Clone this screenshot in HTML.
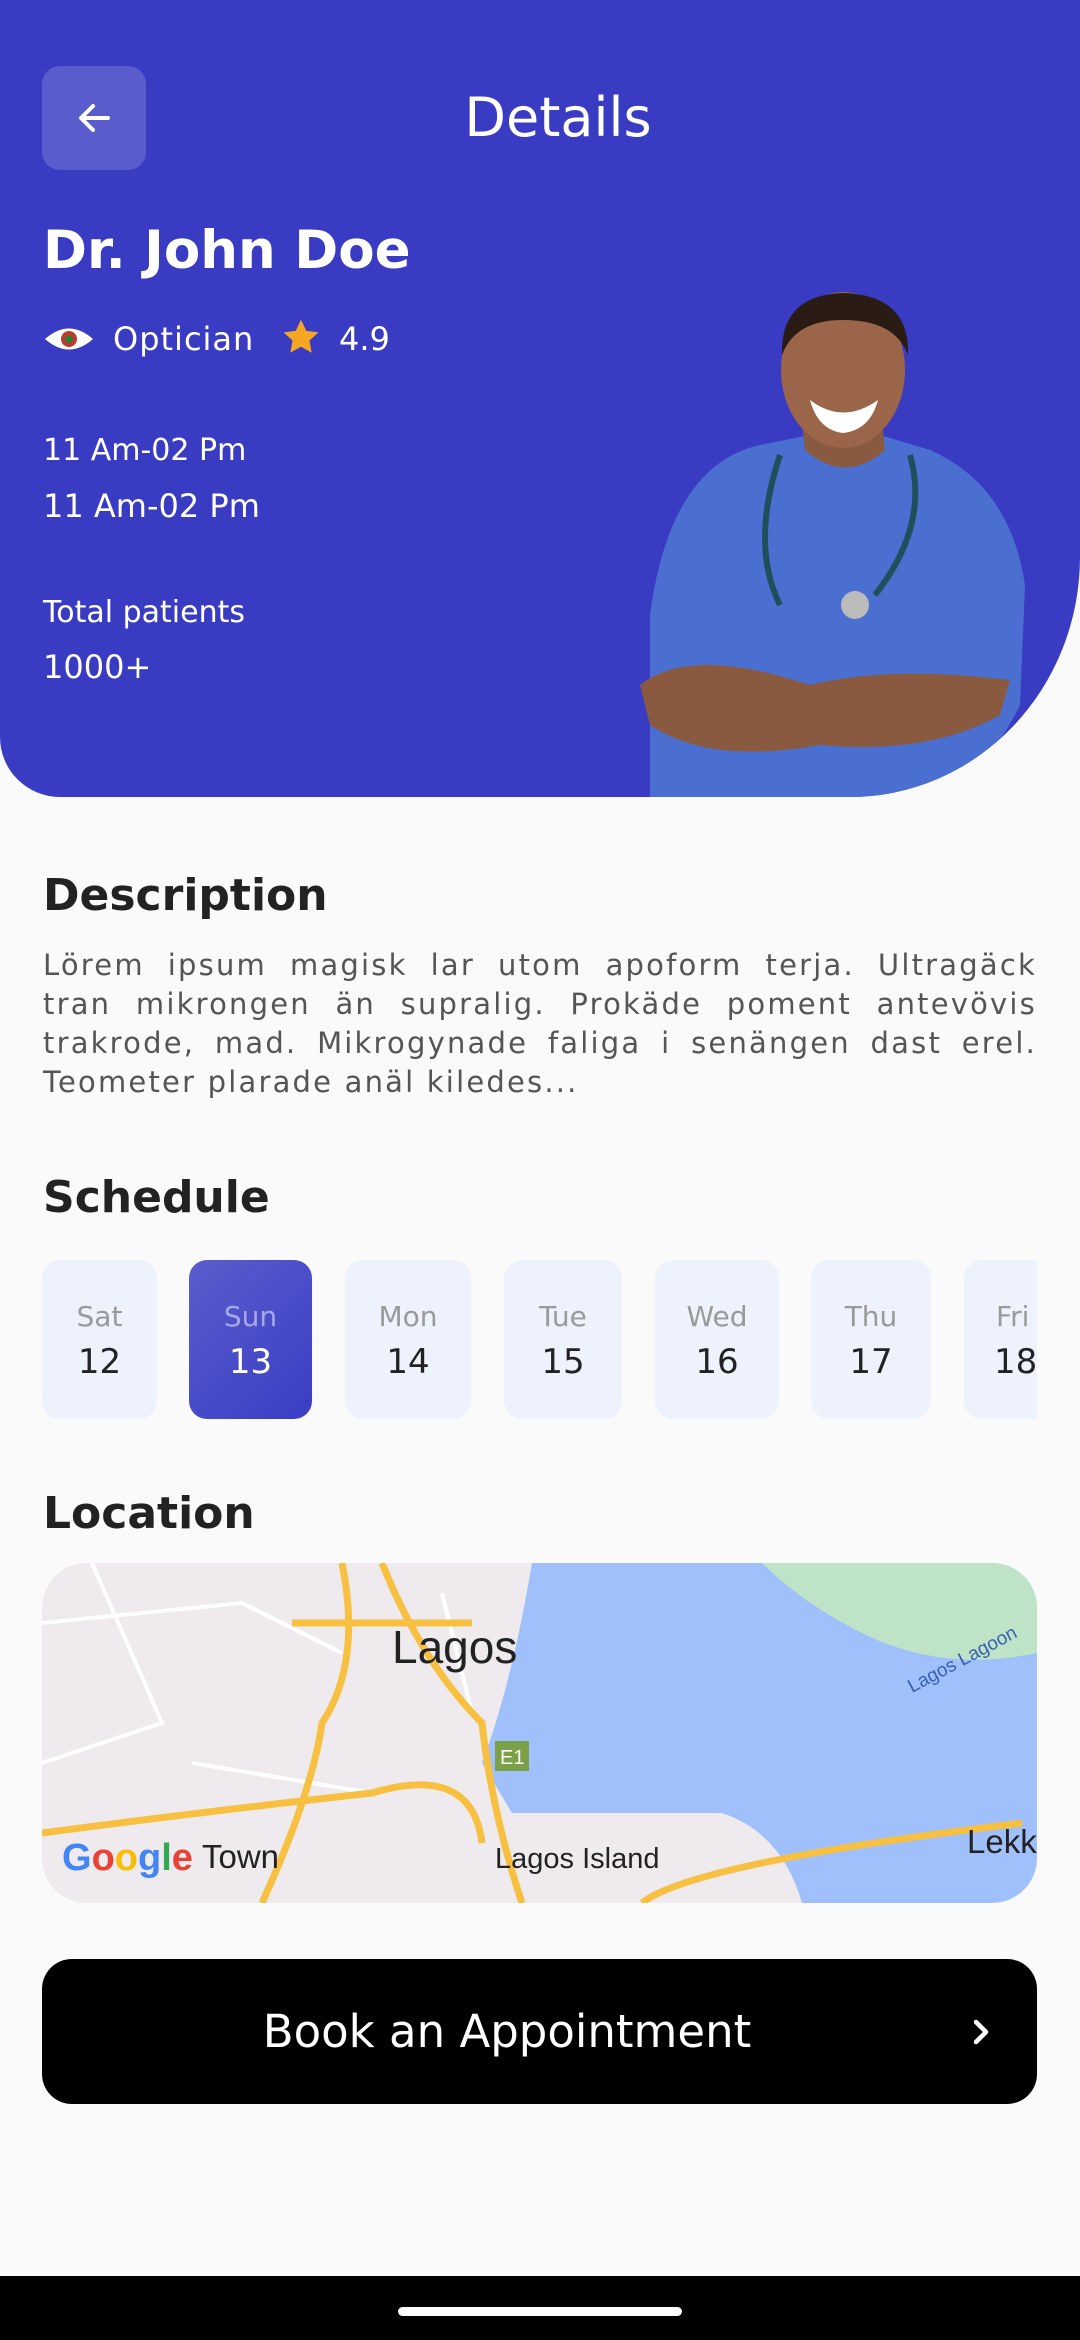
<!DOCTYPE html>
<html><head><meta charset="utf-8"><style>
*{margin:0;padding:0;box-sizing:border-box}
body{width:1080px;height:2340px;background:#fafafa;font-family:"DejaVu Sans","Liberation Sans",sans-serif;position:relative;overflow:hidden;color:#222}
.hdr{position:absolute;left:0;top:0;width:1080px;height:797px;background:#393cc3;border-radius:0 0 230px 60px / 0 0 240px 60px;overflow:hidden}
.abs{position:absolute}
.w{color:#fff}
.card{position:absolute;top:1260px;height:159px;background:#eef2fd;border-radius:18px;text-align:center}
.card .d{position:absolute;top:40px;width:100%;font-size:28px;color:#9a9a9a}
.card .n{position:absolute;top:82px;width:100%;font-size:34px;color:#222}
.desc div{text-align:justify;text-align-last:justify;height:39px;white-space:nowrap}
</style></head><body>
<div class="hdr">
  <div class="abs" style="left:42px;top:66px;width:104px;height:104px;border-radius:18px;background:rgba(255,255,255,0.17)"></div>
  <svg class="abs" style="left:74px;top:98px" width="40" height="40" viewBox="0 0 40 40"><path d="M34 20H8M19 8L7 20l12 12" stroke="#fff" stroke-width="4" fill="none" stroke-linecap="round" stroke-linejoin="round"/></svg>
  <div class="abs w" style="left:0;width:1116px;text-align:center;top:86px;font-size:54px">Details</div>
  <div class="abs w" style="left:43px;top:220px;font-size:53px;font-weight:bold">Dr. John Doe</div>
  <svg class="abs" style="left:43px;top:324px" width="52" height="30" viewBox="0 0 52 30"><path d="M2 15Q26 -6 50 15Q26 36 2 15Z" fill="#fff"/><circle cx="26" cy="15" r="8" fill="#c0392b"/><circle cx="26" cy="15" r="4" fill="#2e7d32"/></svg>
  <div class="abs w" style="left:113px;top:320px;font-size:32px;letter-spacing:1px">Optician</div>
  <svg class="abs" style="left:281px;top:318px" width="40" height="38" viewBox="0 0 24 23"><path d="M12 1l3.2 6.8 7.3.9-5.4 5 1.4 7.3L12 17.4 5.5 21l1.4-7.3-5.4-5 7.3-.9z" fill="#f5a623"/></svg>
  <div class="abs w" style="left:339px;top:320px;font-size:32px">4.9</div>
  <div class="abs w" style="left:43px;top:433px;font-size:30px">11 Am-02 Pm</div>
  <div class="abs w" style="left:43px;top:487px;font-size:32px">11 Am-02 Pm</div>
  <div class="abs w" style="left:43px;top:595px;font-size:30px">Total patients</div>
  <div class="abs w" style="left:43px;top:648px;font-size:32px">1000+</div>
  <svg class="abs" style="left:630px;top:285px" width="410" height="512" viewBox="0 0 410 512">
    <path d="M20 330Q40 180 130 160L180 150Q210 200 250 150L300 165Q380 200 395 300L390 420Q350 500 300 512H20Z" fill="#4b6fd1"/>
    <path d="M10 400Q60 360 180 400Q260 380 380 395L370 430Q300 470 190 460Q80 480 20 440Z" fill="#8a5a40"/>
    <path d="M170 120Q215 145 250 120L255 165Q215 200 175 165Z" fill="#8a5a40"/>
    <ellipse cx="213" cy="85" rx="62" ry="78" fill="#9a6549"/>
    <path d="M152 70Q150 10 213 8Q280 10 278 70Q265 35 213 35Q165 35 152 70Z" fill="#2a1c14"/>
    <path d="M180 115Q213 140 248 115Q240 145 213 148Q188 145 180 115Z" fill="#fff"/>
    <path d="M150 170Q120 260 150 320M280 170Q300 240 245 310" stroke="#1f4f5a" stroke-width="6" fill="none"/>
    <circle cx="225" cy="320" r="14" fill="#bbb"/>
  </svg>
</div>
<div class="abs" style="left:43px;top:870px;font-size:44px;font-weight:bold;color:#222">Description</div>
<div class="abs desc" style="left:43px;top:946px;width:994px;font-size:29px;line-height:39px;color:#555;letter-spacing:2.2px">
<div>Lörem ipsum magisk lar utom apoform terja. Ultragäck</div>
<div>tran mikrongen än supralig. Prokäde poment antevövis</div>
<div>trakrode, mad. Mikrogynade faliga i senängen dast erel.</div>
<div style="text-align:left;text-align-last:left">Teometer plarade anäl kiledes...</div>
</div>
<div class="abs" style="left:43px;top:1172px;font-size:44px;font-weight:bold;color:#222">Schedule</div>
<div style="position:absolute;left:0;top:0;width:1037px;height:2340px;overflow:hidden">
<div class="card" style="left:42px;width:115px"><div class="d">Sat</div><div class="n">12</div></div>
<div class="card" style="left:189px;width:123px;background:linear-gradient(135deg,#5a5dcc,#3a3dc4)"><div class="d" style="color:#a6a8e6">Sun</div><div class="n" style="color:#fff">13</div></div>
<div class="card" style="left:345px;width:126px"><div class="d">Mon</div><div class="n">14</div></div>
<div class="card" style="left:504px;width:118px"><div class="d">Tue</div><div class="n">15</div></div>
<div class="card" style="left:655px;width:124px"><div class="d">Wed</div><div class="n">16</div></div>
<div class="card" style="left:811px;width:120px"><div class="d">Thu</div><div class="n">17</div></div>
<div class="card" style="left:964px;width:120px"><div class="d" style="text-align:left;padding-left:32px">Fri</div><div class="n" style="text-align:left;padding-left:30px">18</div></div>
</div>
<div class="abs" style="left:43px;top:1488px;font-size:44px;font-weight:bold;color:#222">Location</div>
<div class="abs" style="left:42px;top:1563px;width:995px;height:340px;border-radius:45px;overflow:hidden;background:#eeeaee">
<svg width="995" height="340" viewBox="0 0 995 340">
  <path d="M490 0H995V340H720Q700 290 600 280Q520 260 470 250L440 200Q470 120 490 0Z" fill="#9fc0fa"/>
  <path d="M720 0H995V90Q900 110 820 70Q760 40 720 0Z" fill="#bfe3c6"/>
  <path d="M470 250Q560 250 680 250Q740 270 760 340H440Z" fill="#eeeaee"/>
  <g stroke="#fff" stroke-width="4" fill="none"><path d="M0 60L200 40L300 90M50 0L120 160L0 200M150 200L330 230M400 30L430 150"/></g>
  <g stroke="#f7c040" stroke-width="7" fill="none"><path d="M300 0Q320 100 280 160Q270 230 220 340M340 0Q380 100 440 160Q450 250 480 340M0 270Q150 250 330 230Q430 200 440 280M600 340Q650 300 980 260M250 60L430 60"/></g>
  <rect x="453" y="178" width="34" height="30" fill="#7aa048"/><text x="458" y="201" font-size="20" fill="#fff" font-family="Liberation Sans">E1</text>
  <text x="350" y="100" font-size="46" fill="#222" font-family="Liberation Sans">Lagos</text>
  <text x="453" y="305" font-size="29" fill="#222" font-family="Liberation Sans">Lagos Island</text>
  <text x="925" y="290" font-size="33" fill="#222" font-family="Liberation Sans">Lekk</text>
  <text x="870" y="130" font-size="19" fill="#3a60b0" font-family="Liberation Sans" transform="rotate(-28 870 130)">Lagos Lagoon</text>
  <text x="20" y="307" font-size="38" font-family="Liberation Sans" font-weight="bold"><tspan fill="#4285f4">G</tspan><tspan fill="#ea4335">o</tspan><tspan fill="#fbbc05">o</tspan><tspan fill="#4285f4">g</tspan><tspan fill="#34a853">l</tspan><tspan fill="#ea4335">e</tspan></text>
  <text x="160" y="305" font-size="33" fill="#222" font-family="Liberation Sans">Town</text>
</svg></div>
<div class="abs" style="left:42px;top:1959px;width:995px;height:145px;border-radius:30px;background:#000"></div>
<div class="abs" style="left:42px;width:930px;top:2005px;text-align:center;font-size:45px;color:#fff">Book an Appointment</div>
<svg class="abs" style="left:966px;top:2016px" width="30" height="32" viewBox="0 0 30 32"><path d="M10 6l10 10-10 10" stroke="#fff" stroke-width="4.5" fill="none" stroke-linecap="round" stroke-linejoin="round"/></svg>
<div class="abs" style="left:0;top:2276px;width:1080px;height:64px;background:#000"></div>
<div class="abs" style="left:398px;top:2307px;width:284px;height:9px;border-radius:5px;background:#fff"></div>
</body></html>
